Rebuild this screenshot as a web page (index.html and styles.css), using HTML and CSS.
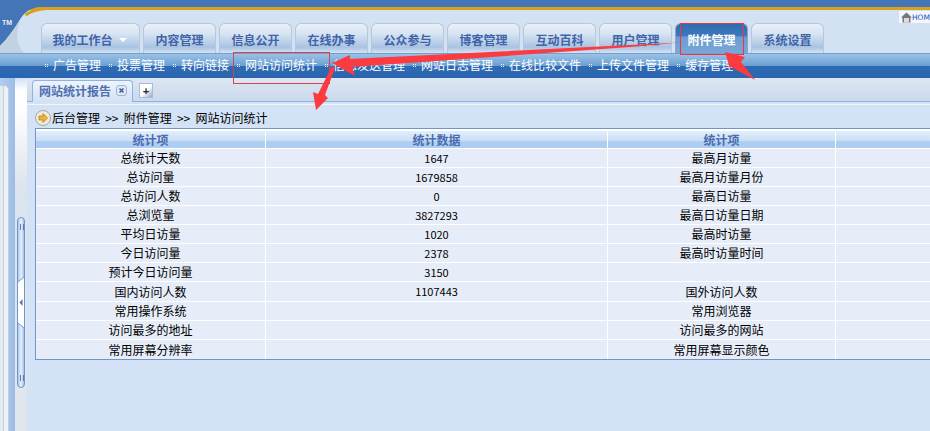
FILE: index.html
```html
<!DOCTYPE html>
<html lang="zh">
<head>
<meta charset="utf-8">
<title>网站访问统计</title>
<link rel="stylesheet" href="styles.css">
</head>
<body>
<div class="page">
  <header class="header">
    <div class="topbar"></div>
    <svg class="logo-curve" width="60" height="53" viewBox="0 0 60 53"><path d="M0 0H60V6H46C33 7 26 10 21 18C15 28 8 38 0 46Z" fill="#4475b6"/><path d="M60 8.500H46C37 9 31 11 25.500 15" fill="none" stroke="#d9a019" stroke-width="3"/><path d="M0 46C8 38 15 28 21 18C17 30 14 42 24 53H0Z" fill="#c3d2e2"/></svg>
    <span class="tm">TM</span>
    <a class="home"><svg width="11" height="11" viewBox="0 0 11 11"><path d="M5.500 .5L11 5.500H9.500V10.500H1.500V5.500H0Z" fill="#777"/><rect x="3" y="6" width="5" height="4.500" fill="#ddd"/></svg>HOM</a>
    <nav class="tabs">
      <a class="tab tab-wide">我的工作台<i class="caret"></i></a>
      <a class="tab">内容管理</a>
      <a class="tab">信息公开</a>
      <a class="tab">在线办事</a>
      <a class="tab">公众参与</a>
      <a class="tab">博客管理</a>
      <a class="tab">互动百科</a>
      <a class="tab">用户管理</a>
      <a class="tab tab-active">附件管理</a>
      <a class="tab">系统设置</a>
    </nav>
  </header>
  <nav class="subnav">
    <a class="subitem">广告管理</a>
    <a class="subitem">投票管理</a>
    <a class="subitem">转向链接</a>
    <a class="subitem">网站访问统计</a>
    <a class="subitem">信息发送管理</a>
    <a class="subitem">网站日志管理</a>
    <a class="subitem">在线比较文件</a>
    <a class="subitem">上传文件管理</a>
    <a class="subitem">缓存管理</a>
  </nav>
  <div class="body">
    <aside class="side">
      <div class="side-frame"><div class="side-panel"></div></div>
      <div class="splitter">
        <div class="handle">
          <span class="grip"></span>
          <svg class="notch" width="6" height="51" viewBox="0 0 6 51"><path d="M0 5L6 0V51L0 46Z" fill="#fff"/><path d="M0 5L6 0M0 46L6 51" fill="none" stroke="#6f95c9"/><path d="M1.500 25.500L4.500 22V29Z" fill="#4f76ae"/></svg>
          <span class="grip"></span>
        </div>
      </div>
    </aside>
    <main class="main">
      <div class="tabstrip">
        <div class="doc-tab">网站统计报告
          <svg class="close" width="11" height="11" viewBox="0 0 11 11"><rect x=".5" y=".5" width="10" height="10" rx="2.500" fill="#dfe8f5" stroke="#9db5d8"/><path d="M3.500 3.500L7.500 7.500M7.500 3.500L3.500 7.500" stroke="#3f5f96" stroke-width="1.600"/></svg>
        </div>
        <div class="add">+</div>
      </div>
      <div class="crumb">
        <svg class="crumb-icon" width="16" height="16" viewBox="0 0 16 16"><circle cx="8" cy="8" r="7.500" fill="#efeadb" stroke="#a9a9a0"/><path d="M4 6H8V3.500L12.500 8L8 12.500V10H4Z" fill="#eeb52c" stroke="#a87a10" stroke-width=".7"/></svg>
        <span class="crumb-text">后台管理 &gt;&gt; 附件管理 &gt;&gt; 网站访问统计</span>
      </div>
      <table class="stats">
        <colgroup><col class="c1"><col class="c2"><col class="c3"><col class="c4"></colgroup>
        <thead><tr><th>统计项</th><th>统计数据</th><th>统计项</th><th></th></tr></thead>
        <tbody>
          <tr><td>总统计天数</td><td>1647</td><td>最高月访量</td><td></td></tr>
          <tr><td>总访问量</td><td>1679858</td><td>最高月访量月份</td><td></td></tr>
          <tr><td>总访问人数</td><td>0</td><td>最高日访量</td><td></td></tr>
          <tr><td>总浏览量</td><td>3827293</td><td>最高日访量日期</td><td></td></tr>
          <tr><td>平均日访量</td><td>1020</td><td>最高时访量</td><td></td></tr>
          <tr><td>今日访问量</td><td>2378</td><td>最高时访量时间</td><td></td></tr>
          <tr><td>预计今日访问量</td><td>3150</td><td></td><td></td></tr>
          <tr class="row-tall"><td>国内访问人数</td><td>1107443</td><td>国外访问人数</td><td></td></tr>
          <tr><td>常用操作系统</td><td></td><td>常用浏览器</td><td></td></tr>
          <tr><td>访问最多的地址</td><td></td><td>访问最多的网站</td><td></td></tr>
          <tr><td>常用屏幕分辨率</td><td></td><td>常用屏幕显示颜色</td><td></td></tr>
        </tbody>
      </table>
    </main>
  </div>
  <svg class="annot" width="930" height="431" viewBox="0 0 930 431">
    <rect x="233.500" y="52.500" width="96" height="31" fill="none" stroke="#d8434a"/>
    <rect x="680.500" y="23.500" width="63" height="31" fill="none" stroke="#f0343c"/>
    <path d="M680 42.500L350 59L350 55L332 63L355 76L352 67L630 47Z" fill="#fb3b40"/>
    <path d="M332 66L335 68L325 95L328 98L316 110L313 92L318 94Z" fill="#fb3b40"/>
    <path d="M725 52L745 57L741 62L755 80L731 67L730 69Z" fill="#fb3b40"/>
  </svg>
</div>
</body>
</html>
```
FILE: styles.css
```css
* { box-sizing: border-box; }
html, body { margin: 0; padding: 0; }
body { overflow: hidden; background: #d3e2f4; }
.page {
  position: relative;
  width: 930px;
  height: 431px;
  overflow: hidden;
  display: flex;
  flex-direction: column;
  font: 12px/1 "Noto Sans CJK SC", "Liberation Sans", sans-serif;
  color: #000;
}
.header {
  position: relative;
  height: 53px;
  flex: none;
  background: #d3e2f2;
  display: flex;
  flex-direction: column;
}
.topbar {
  height: 10px;
  flex: none;
  background: #4475b6;
  border-bottom: 3px solid #d9a019;
}
.logo-curve { position: absolute; left: 0; top: 0; }
.tm { position: absolute; left: 2px; top: 19px; font: bold 7px "Liberation Sans", sans-serif; color: #e8eef6; }
.home {
  position: absolute;
  left: 899px;
  top: 11px;
  width: 31px;
  display: flex;
  align-items: center;
  gap: 0;
  padding-left: 2px;
  height: 12px;
  background: #f4f8fd;
  color: #1f4fbf;
  font: 7.500px "DejaVu Sans", sans-serif;
  white-space: nowrap;
}
.tabs {
  display: flex;
  gap: 3px;
  padding-left: 41px;
  margin-top: 13px;
  height: 30px;
}
.tab {
  width: 73px;
  height: 30px;
  display: flex;
  align-items: center;
  justify-content: center;
  gap: 6px;
  padding-top: 3px;
  border: 1px solid #b7c6d9;
  border-bottom: 0;
  border-radius: 6px 6px 0 0;
  background: linear-gradient(#e8f0f9 0%, #d6e3f2 35%, #a9c3e2 80%, #d6e3f2 100%);
  color: #3f64a8;
  font-weight: 700;
  font-size: 12px;
}
.tab-wide { width: 99px; padding-right: 2px; }
.tab-active {
  background: linear-gradient(#2f6bb0 0%, #3d78bc 40%, #6a9bd1 45%, #7aa7d8 100%);
  color: #fff;
  border-color: #8ea6c6;
}
.caret { width: 0; height: 0; border: 4px solid transparent; border-top: 4px solid #fff; border-bottom: 0; }
.subnav {
  height: 25px;
  flex: none;
  display: flex;
  gap: 8px;
  padding: 0 0 2px 45px;
  align-items: center;
  border-top: 1px solid #6d9fd0;
  background: linear-gradient(#9cc2e6 0%, #6aa0d4 48%, #2f6ab2 52%, #2a65b0 100%);
}
.subitem {
  display: flex;
  align-items: center;
  gap: 5px;
  color: #fff;
  white-space: nowrap;
}
.subitem::before {
  content: "";
  width: 3px;
  height: 3px;
  background:
    linear-gradient(#e8f1fb, #e8f1fb) 0 0 / 1px 1px no-repeat,
    linear-gradient(#e8f1fb, #e8f1fb) 2px 0 / 1px 1px no-repeat,
    linear-gradient(#e8f1fb, #e8f1fb) 0 2px / 1px 1px no-repeat,
    linear-gradient(#e8f1fb, #e8f1fb) 2px 2px / 1px 1px no-repeat;
}
.body { flex: 1; min-height: 0; display: flex; }
.side { width: 27px; flex: none; display: flex; }
.side-frame {
  width: 15px;
  padding: 7px 6px 0 0;
  background: linear-gradient(90deg, #b4cdee, #9dbce6);
}
.side-panel {
  height: 100%;
  border: 1px solid #c0cede;
  border-left: 0;
  border-bottom: 0;
  border-radius: 0 5px 0 0;
  background: linear-gradient(90deg, #e6ebf2 3px, #c5d0de 3px 4px, #eef3f9 4px);
}
.splitter {
  width: 12px;
  background: linear-gradient(#cfe0f8, #fff 12px, #fff 30px, #dbe3ec 110px, #dfe6ee);
  display: flex;
  justify-content: center;
  padding-top: 139px;
}
.handle {
  width: 8px;
  height: 171px;
  display: flex;
  flex-direction: column;
  justify-content: space-between;
  align-items: center;
  padding: 6px 0;
  border: 1px solid #6f95c9;
  border-radius: 4px;
  background: linear-gradient(90deg, #a9c6ec, #e8f1fb 50%, #9fc0ea);
}
.grip { width: 5px; height: 6px; background: radial-gradient(circle, #5a7fb5 0 1px, transparent 1px) 0 0 / 3px 2px; }
.notch { flex: none; display: block; }
.main { flex: 1; min-width: 0; display: flex; flex-direction: column; background: #d3e2f4; }
.tabstrip {
  height: 24px;
  flex: none;
  display: flex;
  align-items: flex-end;
  padding-left: 5px;
  gap: 6px;
  background: linear-gradient(#dde6f3, #cbd9ec);
  border-bottom: 1px solid #8fb2e2;
}
.doc-tab {
  width: 101px;
  height: 22px;
  margin-bottom: -1px;
  padding: 4px 0 0 6px;
  display: flex;
  align-items: flex-start;
  gap: 5px;
  border: 1px solid #8fb2e2;
  border-bottom: 0;
  border-radius: 4px 4px 0 0;
  background: linear-gradient(#eef4fc, #d3e2f4);
  color: #4f6fb0;
  font-weight: 700;
}
.close { flex: none; margin-top: 0; }
.add {
  width: 14px;
  height: 15px;
  margin-bottom: 3px;
  display: flex;
  align-items: center;
  justify-content: center;
  border: 1px solid #a9bcd6;
  background: linear-gradient(135deg, #fff 50%, #9aa9c4);
  font: bold 11px "Liberation Sans", sans-serif;
  color: #223;
}
.crumb {
  height: 24px;
  flex: none;
  display: flex;
  align-items: center;
  gap: 1px;
  padding: 3px 0 0 8px;
  border-top: 1px solid #f0f5fc;
  margin-top: 2px;
}
.crumb-text { word-spacing: 2.500px; }
.crumb-icon { flex: none; }
.stats {
  width: 930px;
  margin-left: 8px;
  table-layout: fixed;
  border-collapse: separate;
  border-spacing: 0;
  border: 1px solid #6f95c9;
  border-right: 0;
}
.c1 { width: 230px; }
.c2 { width: 342px; }
.c3 { width: 228px; }
.stats th {
  height: 20px;
  padding: 0;
  font-size: 12px;
  font-weight: 700;
  color: #4a6cb0;
  background: linear-gradient(#e3eefa 0%, #c9def5 60%, #aecdf2 62%, #aecdf2 100%);
  border-right: 1px solid #fff;
  border-bottom: 1px solid #fff;
  border-top: 2px solid #fff;
}
.stats td {
  height: 19px;
  padding: 0;
  text-align: center;
  background: #e6edf8;
  border-right: 1px solid #fff;
  border-bottom: 1px solid #fff;
}
.stats td:nth-child(2) { font-size: 11px; }
.stats .row-tall td { height: 20px; }
.stats tr:last-child td { border-bottom: 0; }
.annot { position: absolute; left: 0; top: 0; pointer-events: none; }
```
